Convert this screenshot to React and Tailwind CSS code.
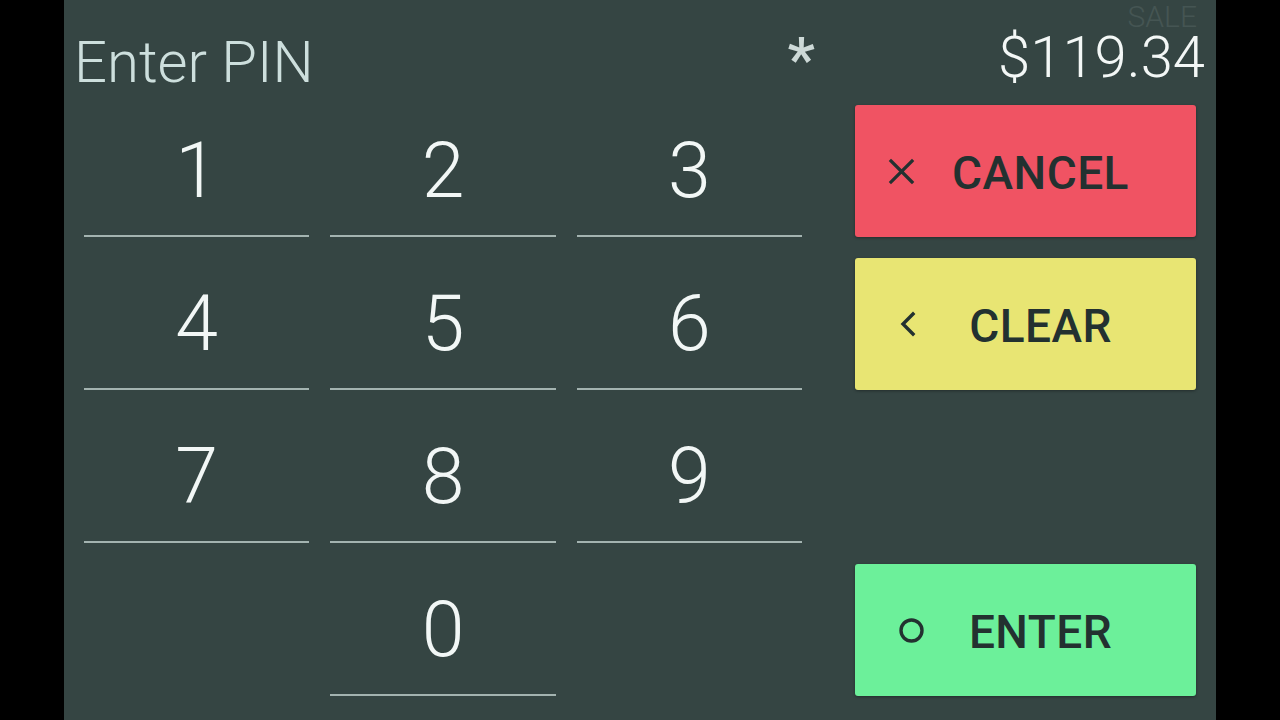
import React from "react";

// PIN entry pad: keypad on the left, action buttons on the right.
const KEYS = ["1", "2", "3", "4", "5", "6", "7", "8", "9", "", "0", ""];

function XIcon() {
  return (
    <svg width="27" height="27" viewBox="0 0 27 27" fill="none" stroke="currentColor" strokeWidth="3.2" strokeLinecap="square">
      <path d="M3 3L24 24M24 3L3 24" />
    </svg>
  );
}

function ChevronIcon() {
  return (
    <svg width="16" height="28" viewBox="0 0 16 28" fill="none" stroke="currentColor" strokeWidth="3.4" strokeLinecap="square">
      <path d="M13 4L3 14L13 24" />
    </svg>
  );
}

function CircleIcon() {
  return (
    <svg width="25" height="25" viewBox="0 0 25 25" fill="none" stroke="currentColor" strokeWidth="3.4">
      <circle cx="12.5" cy="12.5" r="10.5" />
    </svg>
  );
}

function ActionButton({ bg, icon, iconPad, label }) {
  return (
    <button className={`flex items-center h-full w-full rounded-[3px] shadow-[0_1px_3px_rgba(0,0,0,0.35)] text-[#233130] ${bg}`}>
      <span className={`w-[90px] shrink-0 flex items-center ${iconPad}`}>{icon}</span>
      <span className="flex-1 pr-[60px] pt-[4px] text-center text-[46px] font-medium leading-none tracking-[0.01em]">{label}</span>
    </button>
  );
}

export default function App() {
  return (
    <div className="w-full h-[720px] bg-black flex justify-center" style={{ fontFamily: "Roboto, 'Noto Sans', sans-serif" }}>
      <div className="w-[1152px] h-[720px] bg-[#354543] flex flex-col">
        <div className="h-[105px] flex">
          <div className="w-[754px] flex justify-between">
            <h1 className="pl-[10px] pt-[33px] text-[58px] font-light leading-none text-[#cddfdd]">Enter PIN</h1>
            <span className="pt-[29px] pr-[3px] text-[62px] font-medium leading-none text-[#cdd9d7]">*</span>
          </div>
          <div className="flex-1 flex flex-col items-end pr-[11px]">
            <div className="pt-[6px] pr-[8px] text-[30px] font-light leading-[22px] text-[#455553]">SALE</div>
            <div className="mt-[5px] text-[58px] font-light leading-[48px] text-[#f3f7f6]">$119.34</div>
          </div>
        </div>

        <div className="flex pl-[20px]">
          <div className="w-[718px] grid grid-cols-3 gap-x-[21px] gap-y-[21px]">
            {KEYS.map((k, i) => (
              <div
                key={i}
                className={`h-[132px] pt-[2px] flex items-center justify-center text-[77px] font-light leading-none text-[#f2f7f6] ${k ? "border-b-2 border-[#a3b3b0]" : ""}`}
              >
                {k}
              </div>
            ))}
          </div>

          <div className="ml-[53px] w-[341px] grid grid-rows-[132px_132px_132px_132px] gap-y-[21px]">
            <ActionButton bg="bg-[#f05363]" icon={<XIcon />} iconPad="pl-[33px]" label="CANCEL" />
            <ActionButton bg="bg-[#e8e573]" icon={<ChevronIcon />} iconPad="pl-[45px]" label="CLEAR" />
            <div />
            <ActionButton bg="bg-[#6cf09a]" icon={<CircleIcon />} iconPad="pl-[44px]" label="ENTER" />
          </div>
        </div>
      </div>
    </div>
  );
}
